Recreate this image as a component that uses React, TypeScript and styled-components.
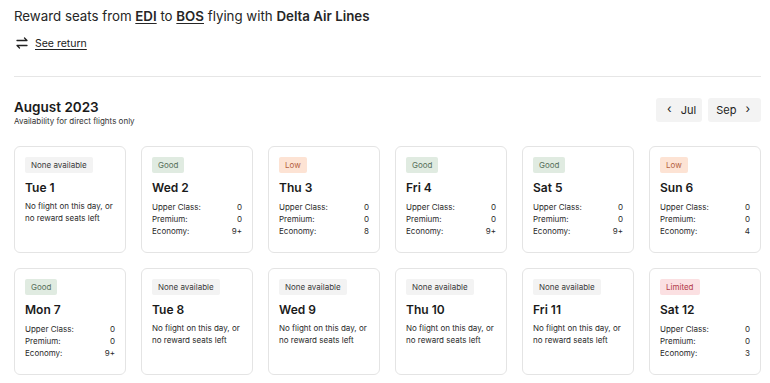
import styled, { createGlobalStyle } from 'styled-components';

type Level = 'none' | 'good' | 'low' | 'limited';

type Day = {
  label: string;
  level: Level;
  seats?: [string, string, string];
};

const days: Day[] = [
  { label: 'Tue 1', level: 'none' },
  { label: 'Wed 2', level: 'good', seats: ['0', '0', '9+'] },
  { label: 'Thu 3', level: 'low', seats: ['0', '0', '8'] },
  { label: 'Fri 4', level: 'good', seats: ['0', '0', '9+'] },
  { label: 'Sat 5', level: 'good', seats: ['0', '0', '9+'] },
  { label: 'Sun 6', level: 'low', seats: ['0', '0', '4'] },
  { label: 'Mon 7', level: 'good', seats: ['0', '0', '9+'] },
  { label: 'Tue 8', level: 'none' },
  { label: 'Wed 9', level: 'none' },
  { label: 'Thu 10', level: 'none' },
  { label: 'Fri 11', level: 'none' },
  { label: 'Sat 12', level: 'limited', seats: ['0', '0', '3'] },
];

const badgeText: Record<Level, string> = {
  none: 'None available',
  good: 'Good',
  low: 'Low',
  limited: 'Limited',
};

const badgeColors: Record<Level, { bg: string; fg: string }> = {
  none: { bg: '#f3f3f3', fg: '#3a3a3a' },
  good: { bg: '#e0ebe1', fg: '#56705a' },
  low: { bg: '#fde3d4', fg: '#b4603f' },
  limited: { bg: '#fbe0e2', fg: '#b23a48' },
};

const App = () => {
  return (
    <>
      <GlobalStyle />
      <Page>
        <Title>
          Reward seats from <Code>EDI</Code> to <Code>BOS</Code> flying with <strong>Delta Air Lines</strong>
        </Title>
        <ReturnLink>
          <svg width="16" height="14" viewBox="0 0 16 14" fill="none" stroke="#222" strokeWidth="1.3" strokeLinecap="round" strokeLinejoin="round">
            <path d="M3 4.5h10M10.5 2l2.5 2.5" />
            <path d="M13 9.5H3M5.5 12L3 9.5" />
          </svg>
          <span>See return</span>
        </ReturnLink>
        <Divider />
        <MonthBar>
          <div>
            <Month>August 2023</Month>
            <Note>Availability for direct flights only</Note>
          </div>
          <NavGroup>
            <NavButton $side="prev">
              <Chevron>‹</Chevron>Jul
            </NavButton>
            <NavButton $side="next">
              Sep<Chevron>›</Chevron>
            </NavButton>
          </NavGroup>
        </MonthBar>
        <Grid>
          {days.map((d) => (
            <Card key={d.label}>
              <Badge $level={d.level}>{badgeText[d.level]}</Badge>
              <DayName>{d.label}</DayName>
              {d.seats ? (
                <Seats>
                  <span>Upper Class:</span>
                  <Value>{d.seats[0]}</Value>
                  <span>Premium:</span>
                  <Value>{d.seats[1]}</Value>
                  <span>Economy:</span>
                  <Value>{d.seats[2]}</Value>
                </Seats>
              ) : (
                <Empty>
                  No flight on this day, or
                  <br />
                  no reward seats left
                </Empty>
              )}
            </Card>
          ))}
        </Grid>
      </Page>
    </>
  );
};

const GlobalStyle = createGlobalStyle`
  body {
    margin: 0;
    background: #ffffff;
    font-family: Inter, 'Noto Sans', sans-serif;
    color: #1f1f1f;
  }
`;

const Page = styled.div`
  padding: 6px 9px 0 14px;
`;

const Title = styled.h1`
  margin: 0;
  font-size: 13.3px;
  font-weight: 400;
  line-height: 20px;
  color: #262626;

  strong {
    font-weight: 600;
  }
`;

const Code = styled.span`
  font-weight: 600;
  text-decoration: underline;
  text-underline-offset: 2px;
`;

const ReturnLink = styled.a`
  display: flex;
  align-items: center;
  gap: 5px;
  margin-top: 10px;
  font-size: 10.5px;
  color: #222;
  cursor: pointer;

  span {
    text-decoration: underline;
    text-underline-offset: 2px;
  }
`;

const Divider = styled.hr`
  border: none;
  border-top: 1px solid #e6e6e6;
  margin: 26px 0 0;
`;

const MonthBar = styled.div`
  display: flex;
  justify-content: space-between;
  align-items: flex-start;
  margin-top: 21px;
`;

const Month = styled.h2`
  margin: 0;
  font-size: 13.5px;
  font-weight: 600;
  line-height: 18px;
  color: #1a1a1a;
`;

const Note = styled.p`
  margin: 0;
  font-size: 8px;
  line-height: 11px;
  color: #333;
`;

const NavGroup = styled.div`
  display: flex;
  gap: 6px;
`;

const NavButton = styled.button<{ $side: 'prev' | 'next' }>`
  display: flex;
  align-items: center;
  gap: 9px;
  height: 24px;
  padding: ${(p) => (p.$side === 'prev' ? '0 6px 0 11px' : '0 11px 0 8px')};
  border: none;
  border-radius: 3px;
  background: #f3f3f3;
  font-family: inherit;
  font-size: 11px;
  color: #222;
`;

const Chevron = styled.span`
  font-size: 12px;
  line-height: 1;
  margin-top: -2px;
`;

const Grid = styled.div`
  display: grid;
  grid-template-columns: repeat(6, 1fr);
  gap: 15px;
  margin-top: 19px;
`;

const Card = styled.div`
  display: flex;
  flex-direction: column;
  align-items: flex-start;
  height: 107px;
  box-sizing: border-box;
  padding: 10px 10px 0;
  border: 1px solid #e4e4e4;
  border-radius: 6px;
`;

const Badge = styled.span<{ $level: Level }>`
  display: block;
  padding: 0 6px;
  height: 16px;
  line-height: 16px;
  border-radius: 2px;
  font-size: 8px;
  background: ${(p) => badgeColors[p.$level].bg};
  color: ${(p) => badgeColors[p.$level].fg};
`;

const DayName = styled.h3`
  margin: 6px 0 0;
  font-size: 12px;
  font-weight: 600;
  line-height: 17px;
  color: #1a1a1a;
`;

const Empty = styled.p`
  margin: 5px 0 0;
  font-size: 8px;
  line-height: 11.5px;
  color: #2a2a2a;
  white-space: nowrap;
`;

const Seats = styled.div`
  display: grid;
  grid-template-columns: 1fr auto;
  align-self: stretch;
  margin-top: 5px;
  font-size: 8px;
  line-height: 12px;
  color: #2a2a2a;
`;

const Value = styled.span`
  text-align: right;
`;

export default App;
